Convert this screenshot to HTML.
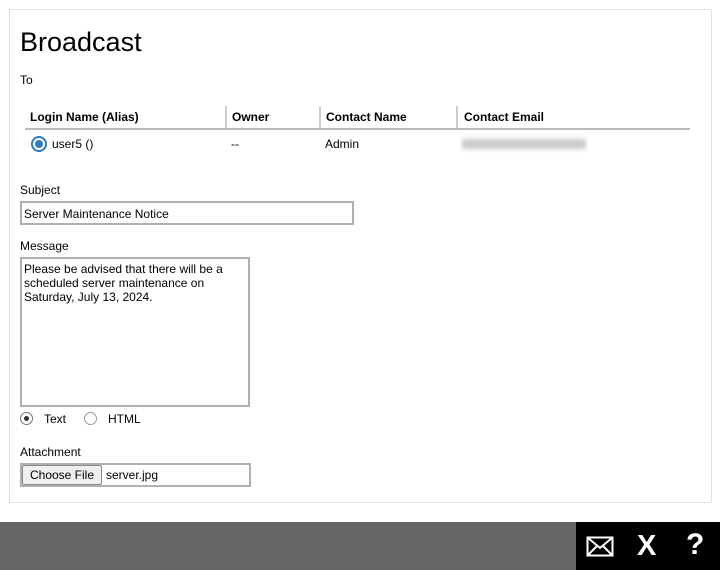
<!DOCTYPE html>
<html><head><style>
body{margin:0;width:720px;height:570px;background:#fff;font-family:"Liberation Sans",sans-serif;color:#000;position:relative;overflow:hidden}
.a{position:absolute}
.panel{left:9px;top:9px;width:701px;height:492px;border:1px solid #e0e0e0}
.t{font-size:12px}
.hd{font-size:12px;font-weight:bold}
.inp{border:2px solid #b0b0b0;box-sizing:border-box;font-size:12px}
</style></head><body>
<div class="a panel"></div>
<div class="a" style="left:20px;top:27px;font-size:27px">Broadcast</div>
<div class="a t" style="left:20px;top:73px">To</div>
<div class="a" style="left:225px;top:106px;width:2px;height:22px;background:#ccc"></div>
<div class="a" style="left:319px;top:106px;width:2px;height:22px;background:#ccc"></div>
<div class="a" style="left:456px;top:106px;width:2px;height:22px;background:#ccc"></div>
<div class="a" style="left:25px;top:128px;width:665px;height:2px;background:#bbb"></div>
<div class="a hd" style="left:30px;top:110px">Login Name (Alias)</div>
<div class="a hd" style="left:232px;top:110px">Owner</div>
<div class="a hd" style="left:326px;top:110px">Contact Name</div>
<div class="a hd" style="left:464px;top:110px">Contact Email</div>
<svg class="a" style="left:31px;top:136px" width="16" height="16" viewBox="0 0 16 16"><circle cx="8" cy="8" r="8" fill="#2b7bc0"/><circle cx="8" cy="8" r="5" fill="none" stroke="#fff" stroke-width="2"/><circle cx="8" cy="8" r="2.5" fill="#2b7bc0"/></svg>
<div class="a t" style="left:52px;top:137px">user5 ()</div>
<div class="a t" style="left:231px;top:137px">--</div>
<div class="a t" style="left:325px;top:137px">Admin</div>
<div class="a" style="left:462px;top:139px;width:124px;height:10px;background:#ccc;filter:blur(2px)"></div>
<div class="a t" style="left:20px;top:183px">Subject</div>
<div class="a inp" style="left:20px;top:201px;width:334px;height:24px;padding:4px 2px">Server Maintenance Notice</div>
<div class="a t" style="left:20px;top:239px">Message</div>
<div class="a inp" style="left:20px;top:257px;width:230px;height:150px;padding:3px 2px;line-height:14px">Please be advised that there will be a scheduled server maintenance on Saturday, July 13, 2024.</div>
<div class="a" style="left:20px;top:412px;width:11px;height:11px;border:1px solid #777;border-radius:50%"></div>
<div class="a" style="left:24px;top:416px;width:5px;height:5px;background:#333;border-radius:50%"></div>
<div class="a t" style="left:44px;top:412px">Text</div>
<div class="a" style="left:84px;top:412px;width:11px;height:11px;border:1px solid #999;border-radius:50%"></div>
<div class="a t" style="left:108px;top:412px">HTML</div>
<div class="a t" style="left:20px;top:445px">Attachment</div>
<div class="a inp" style="left:20px;top:463px;width:231px;height:24px"></div>
<div class="a t" style="left:22px;top:465px;width:80px;height:20px;box-sizing:border-box;border:1px solid #888;border-radius:2px;background:#efefef;text-align:center;line-height:18px">Choose File</div>
<div class="a t" style="left:106px;top:468px">server.jpg</div>
<div class="a" style="left:0;top:522px;width:576px;height:48px;background:#666"></div>
<div class="a" style="left:576px;top:522px;width:144px;height:48px;background:#000"></div>
<svg class="a" style="left:586px;top:536px" width="28" height="21" viewBox="0 0 28 21"><rect x="1.5" y="1.5" width="25" height="18" fill="none" stroke="#fff" stroke-width="2"/><path d="M1.5 1.5L14 12L26.5 1.5M1.5 19.5L11 10M26.5 19.5L17 10" fill="none" stroke="#fff" stroke-width="2"/></svg>
<div class="a" style="left:637px;top:530px;color:#fff;font-weight:bold;font-size:29px">X</div>
<div class="a" style="left:686px;top:528px;color:#fff;font-weight:bold;font-size:30px">?</div>
</body></html>
